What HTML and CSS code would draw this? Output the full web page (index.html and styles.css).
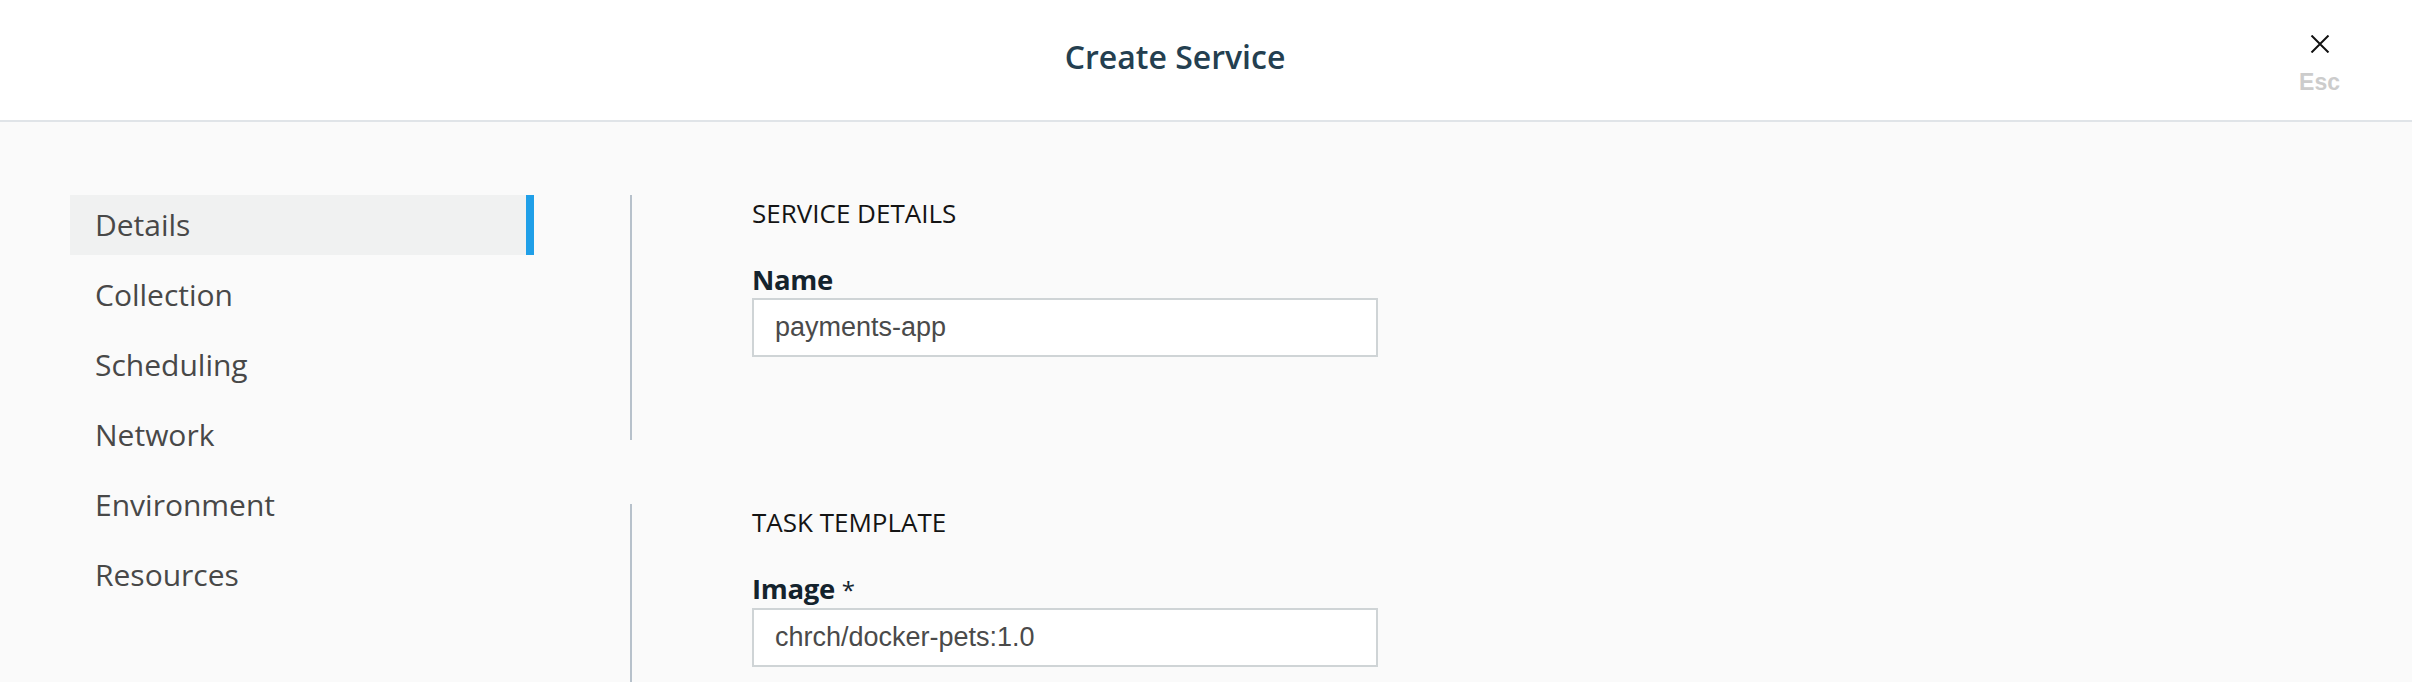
FILE: index.html
```html
<!DOCTYPE html>
<html lang="en">
<head>
<meta charset="utf-8">
<title>Create Service</title>
<link rel="stylesheet" href="styles.css">
</head>
<body>
<header class="topbar">
  <h1 class="topbar-title">Create Service</h1>
  <button class="close-btn" type="button">
    <svg class="close-icon" width="20" height="18" viewBox="0 0 20 18" aria-hidden="true">
      <path d="M1.5 0.5 L18.5 17.5 M18.5 0.5 L1.5 17.5" stroke="#111" stroke-width="2" fill="none"/>
    </svg>
    <span class="close-label">Esc</span>
  </button>
</header>
<div class="page">
  <nav class="sidenav">
    <a class="sidenav-item is-active">Details</a>
    <a class="sidenav-item">Collection</a>
    <a class="sidenav-item">Scheduling</a>
    <a class="sidenav-item">Network</a>
    <a class="sidenav-item">Environment</a>
    <a class="sidenav-item">Resources</a>
  </nav>
  <main class="content">
    <section class="form-section">
      <h2 class="section-title">SERVICE DETAILS</h2>
      <label class="field-label">Name</label>
      <div class="text-input">payments-app</div>
    </section>
    <section class="form-section">
      <h2 class="section-title">TASK TEMPLATE</h2>
      <label class="field-label">Image <span class="req">*</span></label>
      <div class="text-input">chrch/docker-pets:1.0</div>
    </section>
  </main>
</div>
</body>
</html>
```

FILE: styles.css
```css
* { box-sizing: border-box; }
html, body { margin: 0; padding: 0; }
body {
  background: #fafafa;
  font-family: "Open Sans", "Liberation Sans", sans-serif;
  color: #4a4a4a;
  overflow: hidden;
}

.topbar {
  position: relative;
  height: 122px;
  background: #ffffff;
  border-bottom: 2px solid #e0e4e8;
  display: flex;
  align-items: center;
  justify-content: center;
  padding: 0 62px 7px 0;
}
.topbar-title {
  margin: 0;
  font-size: 32px;
  font-weight: 600;
  color: #243f50;
  line-height: normal;
}
.close-btn {
  position: absolute;
  top: 35px;
  right: 72px;
  border: 0;
  background: none;
  padding: 0;
  display: flex;
  flex-direction: column;
  align-items: center;
  gap: 17px;
  cursor: pointer;
}
.close-icon { display: block; }
.close-label {
  font-family: "Liberation Sans", Arial, sans-serif;
  font-weight: 700;
  font-size: 23px;
  line-height: 24px;
  color: #cccccc;
}

.page {
  display: flex;
  align-items: flex-start;
  padding: 73px 0 0 70px;
}

.sidenav {
  width: 464px;
  display: flex;
  flex-direction: column;
  gap: 10px;
  flex-shrink: 0;
}
.sidenav-item {
  display: block;
  height: 60px;
  line-height: 60px;
  padding-left: 25px;
  font-size: 30px;
  color: #484848;
  border-right: 8px solid transparent;
}
.sidenav-item.is-active {
  background: #f0f1f1;
  border-right-color: #1f9fe8;
}

.content {
  margin-left: 96px;
  display: flex;
  flex-direction: column;
  gap: 64px;
}

.form-section {
  border-left: 2px solid #b7c1cb;
  padding: 0 0 83px 120px;
  width: 748px;
}
.section-title {
  margin: 0;
  font-size: 26px;
  font-weight: 400;
  line-height: 36px;
  color: #141414;
}
.field-label {
  display: block;
  margin-top: 31px;
  font-size: 27.5px;
  font-weight: 700;
  line-height: 36px;
  color: #14232d;
  letter-spacing: -0.3px;
}
.req {
  font-weight: 400;
  font-size: 24px;
}
.text-input {
  height: 59px;
  width: 626px;
  border: 2px solid #cfd4d6;
  background: #ffffff;
  padding: 0 21px;
  display: flex;
  align-items: center;
  font-family: "Liberation Sans", Arial, sans-serif;
  font-size: 27px;
  color: #4a4a4a;
}
```
